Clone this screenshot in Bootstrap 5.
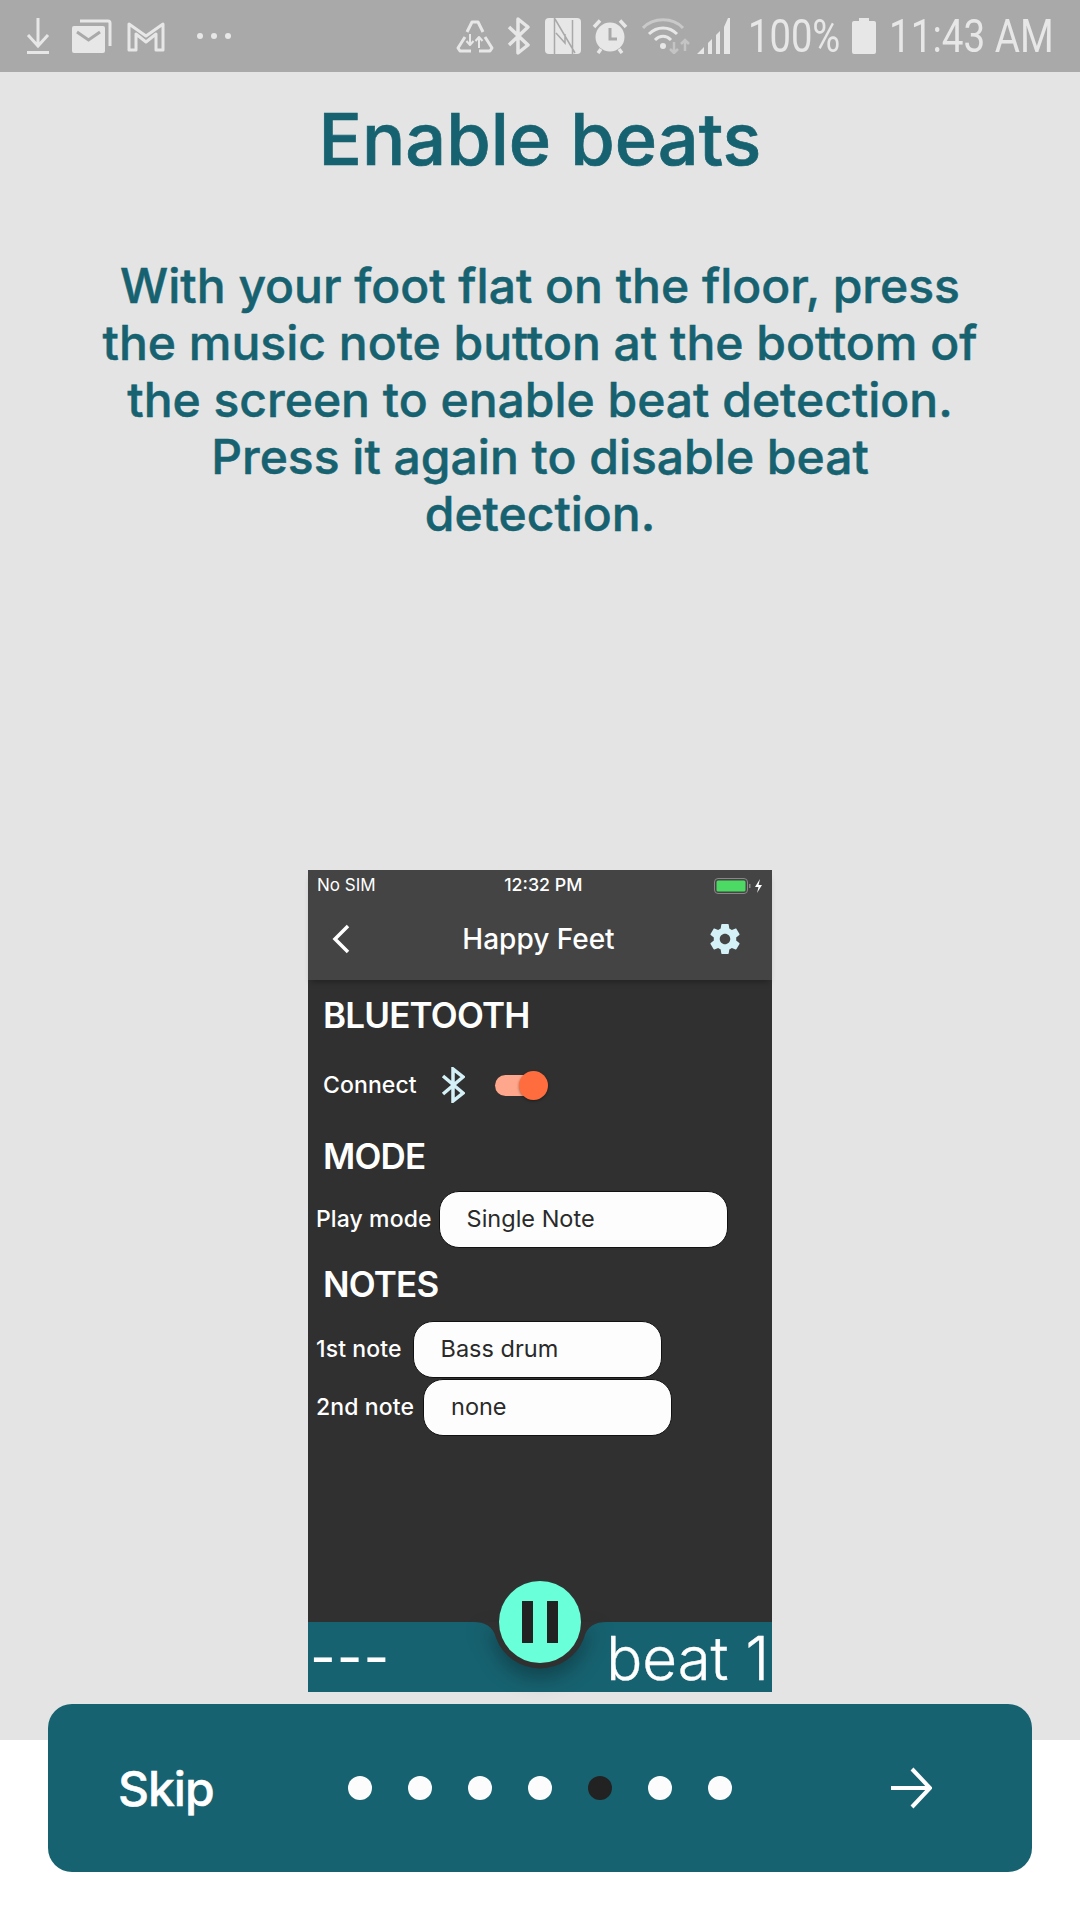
<!DOCTYPE html>
<html lang="en">
<head>
  <meta charset="UTF-8" />
  <meta name="viewport" content="width=device-width, initial-scale=1" />
  <title>Enable beats</title>
  <link href="https://cdn.jsdelivr.net/npm/bootstrap@5.3.3/dist/css/bootstrap.min.css" rel="stylesheet" />
  <style>
    body {
      width: 1080px;
      height: 1920px;
      overflow: hidden;
      background: #fff;
      font-family: Inter, sans-serif;
    }
    /* android status bar */
    .sys-bar {
      height: 72px;
      background: #a9a9a9;
      color: #e7e7e7;
      padding-left: 26px;
    }
    .sys-text {
      font-family: Roboto, sans-serif;
      font-size: 46px;
      line-height: 72px;
      white-space: nowrap;
      display: block;
      transform-origin: left center;
    }
    .sys-pct { width: 90px; margin-left: 16px; transform: scaleX(.83); }
    .sys-time { width: 166px; margin-left: 13px; margin-right: 25px; transform: scaleX(.84); }
    .sys-dot { width: 6px; height: 6px; border-radius: 50%; background: #e7e7e7; }

    /* intro slide */
    .slide {
      height: 1668px;
      background: #e4e4e4;
      color: #176270;
    }
    .slide-title {
      font-size: 72px;
      font-weight: 500;
      -webkit-text-stroke: .7px #176270;
      line-height: 88px;
      padding-top: 23px;
      margin: 0;
    }
    .slide-copy {
      font-size: 48px;
      font-weight: 500;
      -webkit-text-stroke: .5px #176270;
      line-height: 57px;
      width: 890px;
      margin: 74px auto 0;
    }

    /* phone shot */
    .shot {
      width: 464px;
      height: 822px;
      margin: 328px auto 0;
      background: #303030;
      color: #fff;
      font-family: Inter, sans-serif;
    }
    .shot-top { height: 110px; background: #444; box-shadow: 0 5px 6px -3px rgba(0,0,0,.3); }
    .shot-status { height: 31px; padding: 0 8px 0 9px; font-size: 17px; }
    .shot-status .shot-clock { font-size: 17.800px; font-weight: 500; margin-right: 3px; }
    .shot-head { height: 79px; padding: 0 29px 4px 24px; }
    .shot-name { font-size: 28px; font-weight: 500; margin-left: 20px; }
    .shot-body { height: 642px; }
    .shot-h { font-size: 35px; font-weight: 600; letter-spacing: -.8px; line-height: 42px; padding-left: 15px; margin: 0; }
    .shot-lbl { font-size: 23px; font-weight: 500; letter-spacing: .1px; white-space: nowrap; }
    .pick-row { padding-left: 8px; height: 58px; }
    .pick {
      height: 57px;
      background: #fdfdfd;
      color: #2a2a2a;
      border: 1px solid #111;
      border-radius: 20px;
      font-size: 23.500px;
      padding-left: 27px;
      display: flex;
      align-items: center;
    }
    .pick-wide { width: 289px; margin-left: 7px; }
    .pick-mid { width: 249px; margin-left: 9px; }
    .pick-first { margin-left: 11px; }
    .toggle-track { width: 33px; height: 21px; border-radius: 11px 0 0 11px; background: #ffa78c; }
    .toggle-knob { width: 29px; height: 29px; border-radius: 50%; background: #ff6d3f; margin-left: -9px; box-shadow: 0 1px 3px rgba(0,0,0,.4); }

    .beat-bar { height: 70px; background: #176270; }
    .beat-dash { font-size: 56px; font-weight: 400; letter-spacing: 1px; padding-left: 2px; line-height: 1; }
    .beat-num { font-size: 60px; font-weight: 300; -webkit-text-stroke: .4px #fff; line-height: 1; padding-right: 3px; padding-top: 2px; white-space: nowrap; }
    .notch {
      position: absolute;
      left: 162px;
      top: 0;
      filter: drop-shadow(0 10px 10px rgba(0,0,0,.3));
    }
    .fab {
      position: absolute;
      left: 191px;
      top: -41px;
      width: 82px;
      height: 82px;
      border-radius: 50%;
      background: #69ffd9;
      gap: 14px;
    }
    .fab i { display: block; width: 11px; height: 42px; background: #222; }

    /* footer nav */
    .foot-panel {
      width: 984px;
      height: 168px;
      margin: -36px auto 0;
      padding: 0 100px 0 70px;
      background: #176270;
      color: #fff;
      border-radius: 24px;
    }
    .foot-skip { font-size: 48px; font-weight: 500; -webkit-text-stroke: .5px #fff; letter-spacing: -1px; width: 122px; padding-top: 2px; }
    .foot-dots { gap: 36px; margin-left: 108px; }
    .foot-dot { width: 24px; height: 24px; border-radius: 50%; background: #fcfcfc; }
    .foot-dot.on { background: #222; }
  </style>
</head>
<body>
  <!-- status bar -->
  <div class="sys-bar d-flex align-items-center">
    <svg width="24" height="36" viewBox="0 0 24 36" class="flex-shrink-0"><path d="M12 0V28M2 17L12 28L22 17" fill="none" stroke="#e7e7e7" stroke-width="3"/><rect x="1" y="33" width="22" height="3" fill="#e7e7e7"/></svg>
    <svg width="40" height="34" viewBox="0 0 40 34" class="flex-shrink-0" style="margin-left:22px"><path d="M8 2H36a2 2 0 0 1 2 2V27" fill="none" stroke="#e7e7e7" stroke-width="3"/><rect y="7" width="33" height="27" rx="2" fill="#e7e7e7"/><path d="M5 13L16.500 21L28 13" fill="none" stroke="#a9a9a9" stroke-width="3"/></svg>
    <svg width="38" height="31" viewBox="0 0 38 31" class="flex-shrink-0" style="margin-left:15px"><path d="M2 3L19 15L36 3V29H29V13L19 21L9 13V29H2Z" fill="none" stroke="#e7e7e7" stroke-width="3" stroke-linejoin="round"/></svg>
    <div class="d-flex gap-2 flex-shrink-0" style="margin-left:32px"><span class="sys-dot"></span><span class="sys-dot"></span><span class="sys-dot"></span></div>

    <div class="d-flex align-items-center ms-auto">
      <svg width="38" height="34" viewBox="0 0 38 34" class="flex-shrink-0"><g fill="none" stroke="#e7e7e7" stroke-width="3" stroke-linejoin="round"><path d="M11 13L16 3H22L27 13M9 18L2 29L4 32H15M29 18L36 29L34 32H23"/><path d="M14 15V26M10.500 22L14 26L17.500 22M23 29V18M19.500 22L23 18L26.500 22" stroke-width="2"/></g></svg>
      <svg width="24" height="38" viewBox="0 0 24 38" class="flex-shrink-0" style="margin-left:13px"><path d="M2 10L21 28L11 36V2L21 10L2 28" fill="none" stroke="#e7e7e7" stroke-width="3.500" stroke-linejoin="round"/></svg>
      <svg width="36" height="36" viewBox="0 0 36 36" class="flex-shrink-0" style="margin-left:14px"><rect width="36" height="36" rx="4" fill="#e7e7e7"/><path d="M9.500 0V36M27.500 2V36M10 1L30 35M11 15L20 25V16" fill="none" stroke="#a9a9a9" stroke-width="1.500"/></svg>
      <svg width="36" height="36" viewBox="0 0 36 36" class="flex-shrink-0" style="margin-left:11px"><circle cx="18" cy="19" r="14.500" fill="#e7e7e7"/><path d="M2 9L8 2.500M34 9L28 2.500M6 35L9 31M30 35L27 31" stroke="#e7e7e7" stroke-width="3.500" fill="none"/><path d="M18 10V21H25" fill="none" stroke="#a9a9a9" stroke-width="3"/></svg>
      <svg width="48" height="36" viewBox="0 0 48 36" class="flex-shrink-0" style="margin-left:14px"><g fill="none" stroke-width="3"><path d="M1 10C11 -1 31 -1 41 10" stroke="#c9c9c9"/><path d="M7 16C15 8 27 8 35 16M13 22C18 17 24 17 29 22" stroke="#e7e7e7"/></g><circle cx="21" cy="28" r="3" fill="#e7e7e7"/><path d="M32 24V35M28 31L32 35L36 31M43 33V22M39 26L43 22L47 26" fill="none" stroke="#c4c4c4" stroke-width="2.500"/></svg>
      <svg width="35" height="36" viewBox="0 0 35 36" class="flex-shrink-0" style="margin-left:7px"><path d="M0 36L7 29V36ZM11 25L15 21V36H11ZM19 17L23 13V36H19ZM27 9L31 0H33V36H27Z" fill="#e7e7e7"/></svg>
      <span class="sys-text sys-pct">100%</span>
      <svg width="24" height="36" viewBox="0 0 24 36" class="flex-shrink-0" style="margin-left:14px"><path d="M7 0H17V3H22a2 2 0 0 1 2 2V34a2 2 0 0 1-2 2H2a2 2 0 0 1-2-2V5a2 2 0 0 1 2-2H7Z" fill="#e7e7e7"/></svg>
      <span class="sys-text sys-time">11:43 AM</span>
    </div>
  </div>

  <section class="slide">
    <h1 class="slide-title text-center">Enable beats</h1>
    <p class="slide-copy text-center">With your foot flat on the floor, press the music note button at the bottom of the screen to enable beat detection. Press it again to disable beat detection.</p>

    <div class="shot d-flex flex-column">
      <div class="shot-top position-relative">
        <div class="shot-status d-flex align-items-center justify-content-between">
          <span>No SIM</span>
          <span class="shot-clock">12:32 PM</span>
          <svg width="50" height="18" viewBox="0 0 50 18"><rect x=".5" y="1.500" width="33" height="15" rx="3.500" fill="none" stroke="#888"/><rect x="2.500" y="3.500" width="29" height="11" rx="1.500" fill="#4cd964"/><rect x="35" y="7" width="1.500" height="4" fill="#888"/><path d="M46 2L41 10H44.500L43 16L48 8H44.500Z" fill="#fff"/></svg>
        </div>
        <div class="shot-head d-flex align-items-center justify-content-between">
          <svg width="18" height="30" viewBox="0 0 18 30"><path d="M16 2L3 15L16 28" fill="none" stroke="#fff" stroke-width="3.500"/></svg>
          <span class="shot-name">Happy Feet</span>
          <svg width="36" height="36" viewBox="0 0 24 24"><path fill="#d3f1f7" d="M19.430 12.980c.04-.32.070-.64.070-.98s-.03-.66-.07-.98l2.110-1.650c.19-.15.240-.42.120-.64l-2-3.460c-.12-.22-.39-.3-.61-.22l-2.490 1c-.52-.4-1.080-.73-1.690-.98l-.38-2.650C14.460 2.180 14.250 2 14 2h-4c-.25 0-.46.180-.49.420l-.38 2.650c-.61.250-1.170.59-1.690.98l-2.490-1c-.23-.09-.49 0-.61.220l-2 3.460c-.13.220-.07.490.12.640l2.110 1.650c-.04.320-.07.650-.07.980s.03.660.07.980l-2.110 1.650c-.19.150-.24.420-.12.640l2 3.460c.12.220.39.300.61.220l2.490-1c.52.400 1.080.730 1.690.980l.38 2.650c.03.240.24.420.49.420h4c.25 0 .46-.18.49-.42l.38-2.650c.61-.25 1.170-.59 1.690-.98l2.490 1c.23.090.49 0 .61-.22l2-3.460c.12-.22.070-.49-.12-.64l-2.110-1.650zM12 15.500c-1.930 0-3.500-1.570-3.500-3.500s1.570-3.500 3.500-3.500 3.500 1.570 3.500 3.500-1.570 3.500-3.500 3.500z"/></svg>
        </div>
      </div>

      <div class="shot-body">
        <h2 class="shot-h" style="margin-top:14px">BLUETOOTH</h2>
        <div class="d-flex align-items-center" style="padding-left:15px;height:58px;margin-top:20px">
          <span class="shot-lbl">Connect</span>
          <svg width="24" height="36" viewBox="0 0 24 36" style="margin-left:24px"><path d="M2 9L22 26L12 34V2L22 10L2 27" fill="none" stroke="#d3f1f7" stroke-width="3.500"/></svg>
          <span class="toggle-track" style="margin-left:30px"></span>
          <span class="toggle-knob"></span>
        </div>
        <h2 class="shot-h" style="margin-top:21px">MODE</h2>
        <div class="pick-row d-flex align-items-center" style="margin-top:13px">
          <span class="shot-lbl">Play mode</span>
          <div class="pick pick-wide">Single Note</div>
        </div>
        <h2 class="shot-h" style="margin-top:15px">NOTES</h2>
        <div class="pick-row d-flex align-items-center" style="margin-top:15px">
          <span class="shot-lbl">1st note</span>
          <div class="pick pick-mid pick-first">Bass drum</div>
        </div>
        <div class="pick-row d-flex align-items-center">
          <span class="shot-lbl">2nd note</span>
          <div class="pick pick-mid">none</div>
        </div>
      </div>

      <div class="beat-bar position-relative d-flex align-items-center justify-content-between">
        <span class="beat-dash">---</span>
        <span class="beat-num">beat 1</span>
        <svg class="notch" width="140" height="50" viewBox="0 0 140 50"><path fill="#303030" d="M3 0C15 0 23 4 26 16A47 47 0 0 0 114 16C117 4 125 0 137 0Z"/></svg>
        <div class="fab d-flex align-items-center justify-content-center"><i></i><i></i></div>
      </div>
    </div>
  </section>

  <div class="foot-panel d-flex align-items-center">
    <span class="foot-skip">Skip</span>
    <div class="foot-dots d-flex">
      <span class="foot-dot"></span><span class="foot-dot"></span><span class="foot-dot"></span><span class="foot-dot"></span><span class="foot-dot on"></span><span class="foot-dot"></span><span class="foot-dot"></span>
    </div>
    <svg class="ms-auto" width="42" height="42" viewBox="0 0 42 42"><path d="M1 21H39M22 2L40 21L22 40" fill="none" stroke="#fff" stroke-width="4"/></svg>
  </div>

  <script src="https://cdn.jsdelivr.net/npm/bootstrap@5.3.3/dist/js/bootstrap.bundle.min.js"></script>
</body>
</html>
